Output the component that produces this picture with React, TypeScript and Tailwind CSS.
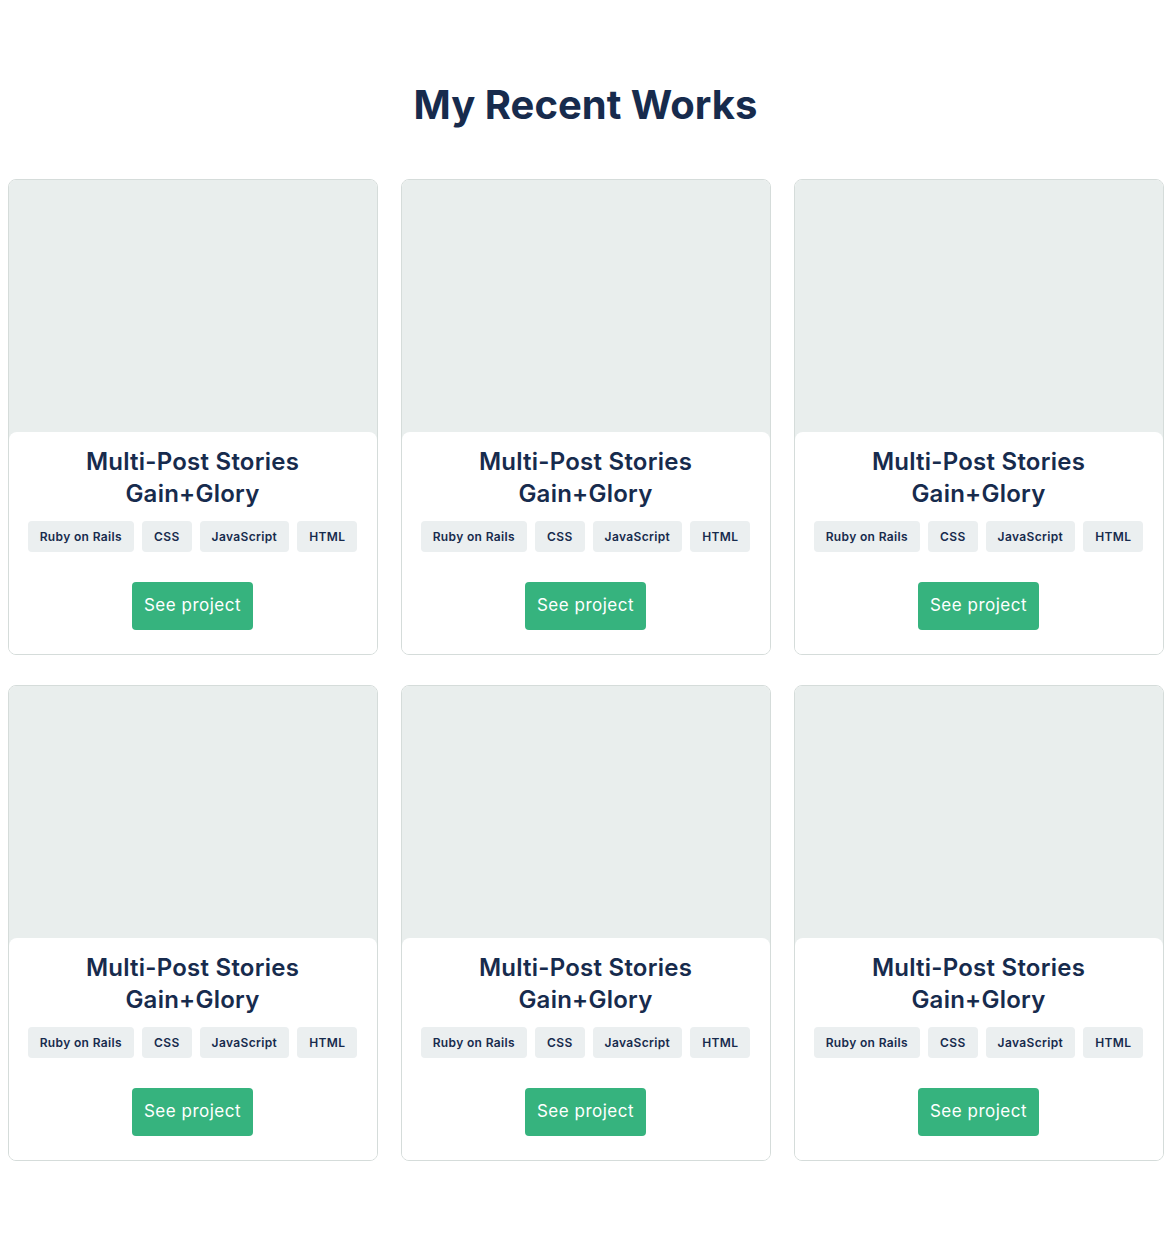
const tags = ["Ruby on Rails", "CSS", "JavaScript", "HTML"];

const ProjectCard = () => {
  return (
    <div className="flex flex-col overflow-hidden rounded-lg border border-[#d5dcda] bg-white">
      <div className="h-[260px] bg-[#e9eeed]" />
      <div className="relative -mt-2 flex flex-col items-center rounded-t-lg bg-white px-4 pt-[14px] pb-6">
        <h3 className="text-center text-[24px] font-semibold leading-8 tracking-[0.01em] text-[#172b4d]">
          Multi-Post Stories
          <br />
          Gain+Glory
        </h3>
        <ul className="mt-[11px] flex gap-[8px]">
          {tags.map((tag) => (
            <li
              key={tag}
              className="rounded-[4px] bg-[#ebeff0] px-3 py-[7px] text-[12px] font-semibold leading-[17px] tracking-[0.03em] text-[#172b4d]"
            >
              {tag}
            </li>
          ))}
        </ul>
        <button className="mt-[30px] h-12 rounded-[4px] bg-[#36b37e] px-3 text-[17px] font-normal tracking-[0.03em] text-white">
          See project
        </button>
      </div>
    </div>
  );
};

export default function App() {
  return (
    <section
      className="min-h-[1244px] bg-white pt-[81px]"
      style={{ fontFamily: "Inter, 'Noto Sans', sans-serif" }}
    >
      <h2 className="text-center text-[40px] font-bold leading-[48px] text-[#172b4d]">
        My Recent Works
      </h2>
      <div className="mx-auto mt-[50px] grid w-[1156px] grid-cols-3 gap-x-[23px] gap-y-[30px]">
        {Array.from({ length: 6 }).map((_, i) => (
          <ProjectCard key={i} />
        ))}
      </div>
    </section>
  );
}
